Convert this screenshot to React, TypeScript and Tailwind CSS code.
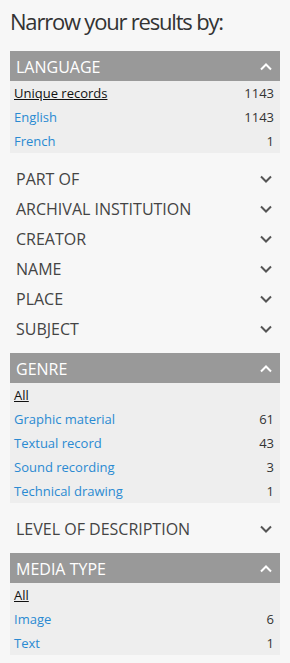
import React from 'react';

type Row = { label: string; count?: number; plain?: boolean };

const Chevron: React.FC<{ up?: boolean; className?: string }> = ({ up, className }) => (
  <svg width="12" height="8" viewBox="0 0 12 8" className={className}>
    <path
      d={up ? 'M1 6.5 L6 1.5 L11 6.5' : 'M1 1.5 L6 6.5 L11 1.5'}
      fill="none"
      stroke="currentColor"
      strokeWidth="2"
    />
  </svg>
);

const OpenFacet: React.FC<{ title: string; rows: Row[] }> = ({ title, rows }) => (
  <div className="mb-[10px]">
    <div className="flex h-[30px] items-center justify-between bg-[#999999] pl-[6px] pr-[8px] pt-[1px] text-[16px] text-white">
      <span>{title}</span>
      <Chevron up className="text-white" />
    </div>
    <ul className="bg-[#eeeeee]">
      {rows.map((row, idx) => (
        <li key={idx} className="flex h-[24px] items-center justify-between pl-[4px] pr-[6px] pt-[1px] text-[13px]">
          {row.plain ? (
            <span className="text-[#111] underline">{row.label}</span>
          ) : (
            <span className="text-[#2a8ad2]">{row.label}</span>
          )}
          {row.count !== undefined && <span className="text-[#333]">{row.count}</span>}
        </li>
      ))}
    </ul>
  </div>
);

const ClosedFacet: React.FC<{ title: string; last?: boolean }> = ({ title, last }) => (
  <div
    className={`flex h-[30px] items-center justify-between pl-[6px] pr-[8px] pt-[1px] text-[16px] text-[#444] ${
      last ? 'mb-[10px]' : ''
    }`}
  >
    <span>{title}</span>
    <Chevron className="text-[#555]" />
  </div>
);

const App: React.FC = () => {
  return (
    <div className="min-h-screen bg-[#f7f7f7] px-[10px] font-['Open_Sans',sans-serif]">
      <h2 className="pt-[6px] pb-[15px] text-[22px] leading-[30px] tracking-[-1.2px] text-[#333]">
        Narrow your results by:
      </h2>

      <OpenFacet
        title="LANGUAGE"
        rows={[
          { label: 'Unique records', count: 1143, plain: true },
          { label: 'English', count: 1143 },
          { label: 'French', count: 1 }
        ]}
      />

      <ClosedFacet title="PART OF" />
      <ClosedFacet title="ARCHIVAL INSTITUTION" />
      <ClosedFacet title="CREATOR" />
      <ClosedFacet title="NAME" />
      <ClosedFacet title="PLACE" />
      <ClosedFacet title="SUBJECT" last />

      <OpenFacet
        title="GENRE"
        rows={[
          { label: 'All', plain: true },
          { label: 'Graphic material', count: 61 },
          { label: 'Textual record', count: 43 },
          { label: 'Sound recording', count: 3 },
          { label: 'Technical drawing', count: 1 }
        ]}
      />

      <ClosedFacet title="LEVEL OF DESCRIPTION" last />

      <OpenFacet
        title="MEDIA TYPE"
        rows={[
          { label: 'All', plain: true },
          { label: 'Image', count: 6 },
          { label: 'Text', count: 1 }
        ]}
      />
    </div>
  );
};

export default App;
